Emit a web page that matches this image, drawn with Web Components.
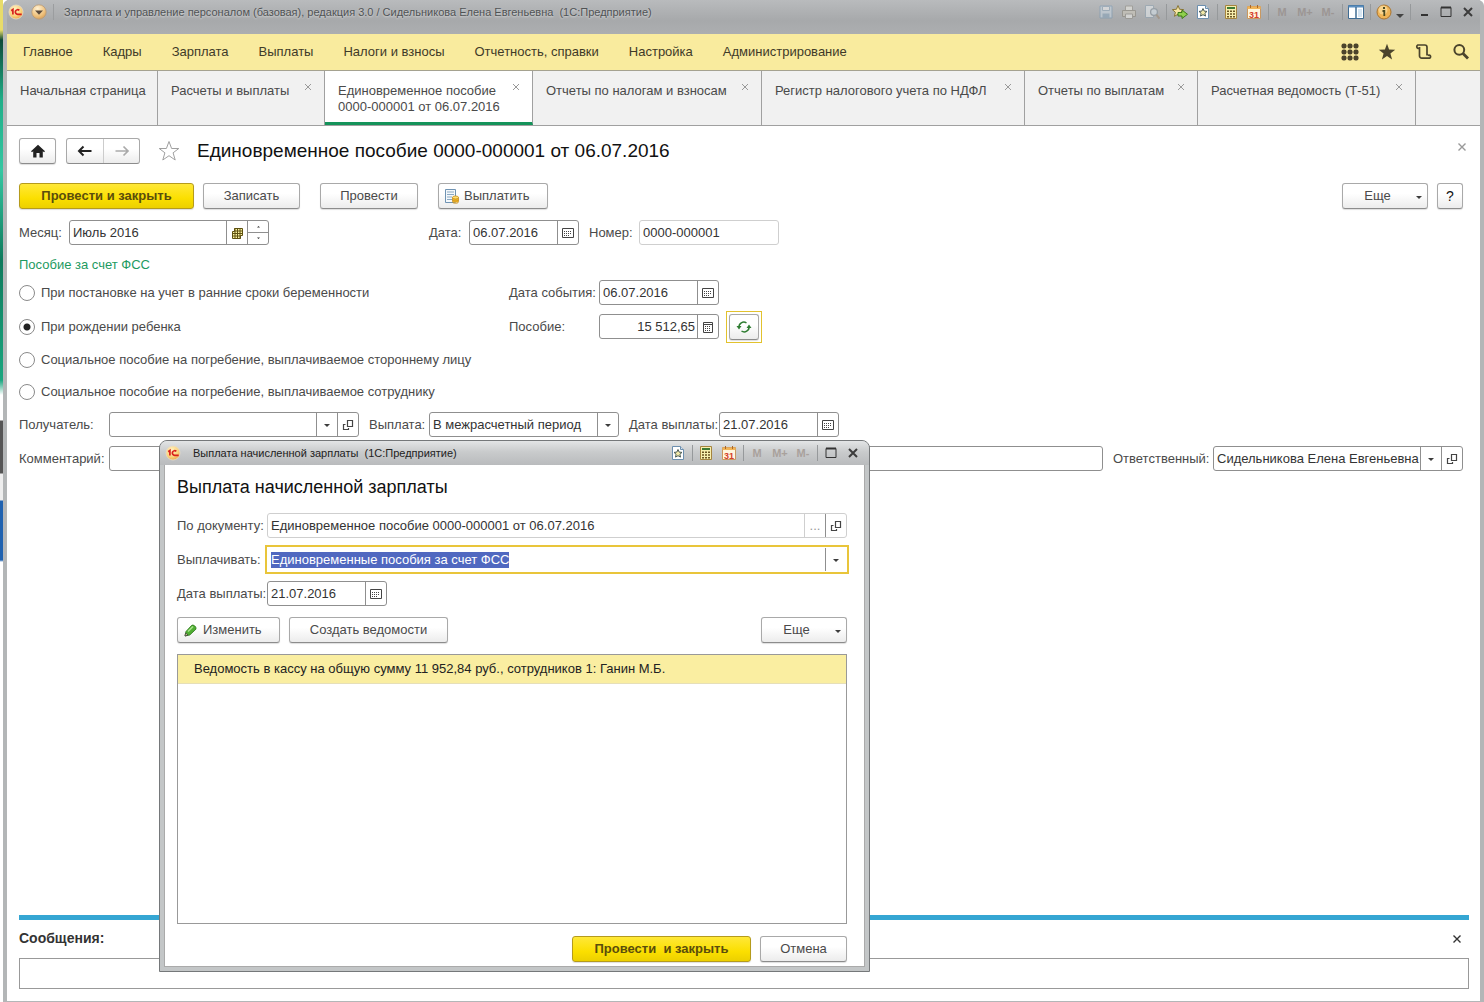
<!DOCTYPE html>
<html lang="ru">
<head>
<meta charset="utf-8">
<title>Зарплата и управление персоналом</title>
<style>
html,body{margin:0;height:100%}
body{font:13px/16px "Liberation Sans",sans-serif;color:#4a4a4a;background:#fff}
</style>
</head>
<body>
<app-window></app-window>
<script>
const ICONS = {
  logo: [16,16,'<defs><radialGradient id="g" cx=".4" cy=".3" r=".8"><stop offset="0" stop-color="#fff3c4"/><stop offset=".6" stop-color="#fbd27a"/><stop offset="1" stop-color="#e79a3c"/></radialGradient></defs><circle cx="8" cy="8" r="7" fill="url(#g)" stroke="#e9dcc8" stroke-width=".8"/><path d="M3.2 6.800l1.700-1.300v5M11.300 6.400a2.300 2.300 0 1 0-1.600 3.900h4" fill="none" stroke="#d8201c" stroke-width="1.700"/>'],
  drop: [16,16,'<defs><radialGradient id="g" cx=".4" cy=".25" r=".9"><stop offset="0" stop-color="#fff1d2"/><stop offset=".6" stop-color="#eec07a"/><stop offset="1" stop-color="#c98e4c"/></radialGradient></defs><circle cx="8" cy="8" r="7.2" fill="url(#g)" stroke="#b79a78" stroke-width=".8"/><path d="M4 6.5h8L8 10.8z" fill="#5b4b3c"/>'],
  save: [16,16,'<g opacity=".45"><path d="M2 2h12v12H2z" fill="#cfe0ee" stroke="#6c93b4"/><path d="M4.5 2.5h7v4h-7z" fill="#fff" stroke="#86a4bd"/><path d="M4.5 9.5h7V14h-7z" fill="#7fa2bf"/></g>'],
  print: [16,16,'<g opacity=".5"><path d="M4.5 2h7v5h-7z" fill="#f5f3ea" stroke="#8f8b80"/><path d="M1.5 6.5h13v6h-13z" fill="#d2ccbb" stroke="#857f70"/><path d="M4.5 10h7v4.5h-7z" fill="#fbfaf5" stroke="#8f8b80"/></g>'],
  preview: [16,16,'<g opacity=".5"><path d="M1.5 1.5h8v12h-8z" fill="#eef3f6" stroke="#8aa0b0"/><circle cx="10" cy="8" r="3.4" fill="#dce9f1" stroke="#7d8b96" stroke-width="1.3"/><path d="M12.4 10.6l3 4" stroke="#9a846a" stroke-width="2"/></g>'],
  favadd: [16,16,'<path d="M6 1.5l1.6 3.8 4.1.3-3.1 2.7 1 4L6 10.200l-3.600 2.100 1-4L.3 5.600l4.100-.3z" fill="#f6e6a4" stroke="#8a7635" stroke-width="1"/><path d="M6 8.500h4V6l5.500 4.300L10 14.500V12H6z" fill="#8fd04c" stroke="#3e7a1b"/>'],
  favdoc: [16,16,'<path d="M2.500 1.500h8l3 3v10h-11z" fill="#fff" stroke="#6c8fae"/><path d="M10.500 1.500v3h3" fill="#d5e2ec" stroke="#6c8fae"/><path d="M8 4.500l1.200 2.600 2.800.3-2.100 1.900.6 2.800L8 10.700l-2.500 1.400.6-2.800L4 7.400l2.800-.3z" fill="#f3e9a8" stroke="#4a5a55" stroke-width="1"/>'],
  calc: [16,16,'<path d="M2.500 1.500h11v13h-11z" fill="#f8efae" stroke="#a5843e"/><path d="M4 3h8v2H4z" fill="#3d7a34"/><g fill="#6a5423"><path d="M4 6.500h2v1.500H4zM7 6.500h2v1.500H7zM10 6.500h2v1.500h-2zM4 9.200h2v1.500H4zM7 9.200h2v1.500H7zM10 9.200h2v1.500h-2zM4 11.900h2v1.500H4zM7 11.900h2v1.500H7zM10 11.900h2v1.500h-2z"/></g>'],
  cal31: [16,16,'<path d="M1.500 2.500h13v12h-13z" fill="#fff6de" stroke="#c99860"/><path d="M1.500 2.500h13V5h-13z" fill="#f2b557"/><path d="M4.500 1v3M11.500 1v3" stroke="#a9662a"/><text x="8" y="13.500" text-anchor="middle" font-family="Liberation Sans,sans-serif" font-size="9" font-weight="bold" fill="#d4402a">31</text>'],
  panes: [16,16,'<path d="M.5 1.500h15v13H.5z" fill="#fff" stroke="#3f6c93"/><path d="M.5 1.500h15v2H.5z" fill="#5b8fc0"/><path d="M8 3v11" stroke="#3f6c93" stroke-width="1.500"/><path d="M10 5h4v8h-4z" fill="#d5e5f2"/>'],
  info: [28,16,'<circle cx="8" cy="8" r="7" fill="#f0b455" stroke="#a97430"/><circle cx="7" cy="6" r="4.500" fill="#fbe0a4" opacity=".7"/><path d="M7 4h2M6.500 7h1.800v5" fill="none" stroke="#4a4a22" stroke-width="1.800"/><path d="M20 10h8l-4 4z" fill="#444"/>'],
  min: [16,16,'<path d="M5 11h7" stroke="#333" stroke-width="2"/>'],
  max: [16,16,'<path d="M3 3.500h10v9H3z" fill="none" stroke="#333"/><path d="M3 3.500h10" stroke="#333" stroke-width="2"/>'],
  close: [16,16,'<path d="M4 4l8 8M12 4l-8 8" stroke="#3c3c3c" stroke-width="2"/>'],
  x: [8,8,'<path d="M1 1l6 6M7 1L1 7" stroke="currentColor"/>'],
  xbold: [8,8,'<path d="M.5.5l7 7M7.500.5l-7 7" stroke="currentColor" stroke-width="1.400"/>'],
  grid: [18,18,'<g fill="#4b442c"><rect x="0.500" y="0.500" width="5" height="5" rx="2"/><rect x="6.500" y="0.500" width="5" height="5" rx="2"/><rect x="12.500" y="0.500" width="5" height="5" rx="2"/><rect x="0.500" y="6.500" width="5" height="5" rx="2"/><rect x="6.500" y="6.500" width="5" height="5" rx="2"/><rect x="12.500" y="6.500" width="5" height="5" rx="2"/><rect x="0.500" y="12.500" width="5" height="5" rx="2"/><rect x="6.500" y="12.500" width="5" height="5" rx="2"/><rect x="12.500" y="12.500" width="5" height="5" rx="2"/></g>'],
  star: [18,18,'<path d="M9 .8l2.100 5.700 6.100.2-4.800 3.800 1.700 5.900L9 13l-5.100 3.400 1.700-5.900L.8 6.700l6.100-.2z" fill="#4b442c"/>'],
  scroll: [18,18,'<path d="M4.500 5.300A1.700 1.700 0 1 1 2.800 2H9.800A2.200 2.200 0 0 1 12 4.200V12.500M4.500 4v8.800a2.300 2.300 0 0 0 2.300 2.400h7.700a1.600 1.600 0 1 0-1.700-2.600" fill="none" stroke="#4b442c" stroke-width="1.700"/>'],
  search: [18,18,'<circle cx="7.300" cy="6.800" r="4.900" fill="none" stroke="#4b442c" stroke-width="2"/><path d="M11 10.500l5 5" stroke="#4b442c" stroke-width="2.800"/>'],
  home: [16,16,'<path d="M8 1.800l7 6.400-1 1.100-1.200-1V14.500H9.500V10h-3v4.500H3.200V8.300L2 9.300 1 8.200z" fill="#222"/>'],
  back: [16,16,'<path d="M1.500 8h13M6.500 3.500L2 8l4.500 4.500" fill="none" stroke="#222" stroke-width="2"/>'],
  fwd: [16,16,'<path d="M1.500 8h13M9.500 3.500L14 8l-4.500 4.500" fill="none" stroke="#aaa" stroke-width="1.700"/>'],
  starline: [22,22,'<path d="M11 1.500l2.600 7h7.200l-5.700 4.300 2.100 7.200L11 15.700l-6.200 4.300 2.100-7.200L1.200 8.500h7.200z" fill="#fff" stroke="#a0a0a0"/>'],
  pay: [16,16,'<path d="M1.500 1.500h10v13h-10z" fill="#f4f8fb" stroke="#6f93b3"/><path d="M3 4h7M3 6.500h7M3 9h5M3 11.500h5" stroke="#8ba9c3"/><path d="M9 9.500h5v5H9z" fill="#f0b62a"/><ellipse cx="11.500" cy="9.500" rx="3" ry="1.500" fill="#ffdf70" stroke="#c68a14" stroke-width=".8"/><path d="M8.500 9.500v4.300c0 2 6 2 6 0V9.500M8.500 11.700c0 1.800 6 1.800 6 0" fill="none" stroke="#c68a14" stroke-width=".8"/>'],
  pencil: [16,16,'<path d="M2 14l1-4.500L8.500 3.500c1.500-1.500 5.500 1.300 4.300 3.800L6.800 13z" fill="#4fae32" stroke="#277317" stroke-width=".8"/><path d="M5 9.500L10 4.500" stroke="#a8e28c" stroke-width="1.600"/><path d="M2 14l.6-3 2.400 2z" fill="#e8d9a8" stroke="#333" stroke-width=".7"/>'],
  caret: [16,16,'<path d="M5 7h6l-3 3z" fill="#3c3c3c"/>'],
  open: [16,16,'<path d="M7.500 3.500h5v6h-5z" fill="none" stroke="#444" stroke-width="1.200"/><path d="M5.500 7.500H3.500v5h5v-1.500" fill="none" stroke="#444" stroke-width="1.200"/>'],
  cal: [16,16,'<path d="M2.500 3.500h11v9h-11z" fill="none" stroke="#444"/><path d="M4 6.500h8M4 8.500h8M4 10.500h6" stroke="#444" stroke-dasharray="1 1"/>'],
  calcsm: [16,16,'<path d="M3.500 3.500h9v10h-9z" fill="none" stroke="#444"/><path d="M4 5.500h8" stroke="#444"/><path d="M5 7.500h6M5 9.500h6M5 11.500h6" stroke="#444" stroke-dasharray="1 1"/>'],
  month: [16,16,'<path d="M5.500 3.500h8v7h-2v3h-8v-7h2z" fill="#fbf3a0"/><path d="M5.500 3.500h8v7h-2v3h-8v-7h2zM3 8.500h11M3 11h9M5 6h8.500M6 3v11M8.500 3v11M11 3v11" fill="none" stroke="#5e5110"/>'],
  refresh: [16,16,'<path d="M3 8.500A4.800 4.800 0 0 1 10.500 4M13 7.500A4.800 4.800 0 0 1 5.500 12" fill="none" stroke="#2f7d32" stroke-width="1.500"/><path d="M.5 7h5L3 10.500zM15.500 9h-5L13 5.500z" fill="#2f7d32"/>']
};

class UiIcon extends HTMLElement {
  connectedCallback() {
    const [w, h, body] = ICONS[this.getAttribute('name')];
    this.attachShadow({mode: 'open'}).innerHTML =
      `<style>:host{display:inline-flex;flex:none}svg{display:block}</style>
       <svg width="${w}" height="${h}" viewBox="0 0 ${w} ${h}" aria-hidden="true">${body}</svg>`;
  }
}
customElements.define('ui-icon', UiIcon);

/* Push button: variants primary, icon only and menu. */
class UiButton extends HTMLElement {
  connectedCallback() {
    const icon = this.getAttribute('icon'), label = this.getAttribute('label') || '';
    this.attachShadow({mode: 'open'}).innerHTML = `<style>
      :host{display:block;flex:none}
      button{box-sizing:border-box;width:100%;height:26px;margin:0;padding:0 5px;display:flex;align-items:center;justify-content:center;gap:4px;
        border:1px solid #a9a9a9;border-bottom-color:#8c8c8c;border-radius:3px;background:linear-gradient(#fff 40%,#ececec);
        font:inherit;color:#4a4a4a;white-space:pre;box-shadow:0 1px 1px #0002}
      :host([primary]) button{background:linear-gradient(#ffe838,#fbdf00 60%,#ecd000);border-color:#b59b1c;color:#5a4d0c;font-weight:bold}
      :host([icon][label]) button{justify-content:flex-start}
      :host([menu]) .t{flex:1;text-align:center}
      :host([menu]) button{padding-right:0}
      :host([menu]) ui-icon{padding-top:2px}
      :host([focused]){outline:1px solid #e2c22e;outline-offset:2px}
      :host([help]) button{color:#111;font-size:14px}
    </style><button type="button" aria-label="${label || this.getAttribute('hint') || ''}">${icon ? `<ui-icon name="${icon}"></ui-icon>` : ''}${label ? `<span class="t">${label}</span>` : ''}${this.hasAttribute('menu') ? '<ui-icon name="caret"></ui-icon>' : ''}</button>`;
  }
}
customElements.define('ui-button', UiButton);

/* Small button inside a field, right of its text. */
class FieldButton extends HTMLElement {
  connectedCallback() {
    const icon = this.getAttribute('icon');
    this.attachShadow({mode: 'open'}).innerHTML = `<style>
      :host{display:flex;flex:none;width:20px;border-left:1px solid var(--line,#8f8f8f)}
      button{flex:1;margin:0;padding:0;border:0;background:none;display:flex;align-items:center;justify-content:center;font:inherit;color:#999}
      ui-icon{margin-top:1px}
    </style><button type="button" aria-label="${this.getAttribute('hint')}">${icon ? `<ui-icon name="${icon}"></ui-icon>` : '...'}</button>`;
  }
}
customElements.define('field-button', FieldButton);

class FieldSpinner extends HTMLElement {
  connectedCallback() {
    this.attachShadow({mode: 'open'}).innerHTML = `<style>
      :host{display:flex;flex-direction:column;flex:none;width:20px;border-left:1px solid #8f8f8f}
      button{flex:1;margin:0;padding:0;border:0;background:none;display:flex;align-items:center;justify-content:center}
      button+button{border-top:1px solid #8f8f8f}
    </style><button type="button" aria-label="Больше"><svg width="5" height="3"><path d="M1 2.500h3L2.500 1z" fill="#333"/></svg></button>
    <button type="button" aria-label="Меньше"><svg width="5" height="3"><path d="M1 .5h3L2.500 2z" fill="#333"/></svg></button>`;
  }
}
customElements.define('field-spinner', FieldSpinner);

/* Labelled text box or drop-down; its buttons are slotted in. */
class FormField extends HTMLElement {
  connectedCallback() {
    const v = this.getAttribute('value') || '';
    const control = this.hasAttribute('select')
      ? `<select id="c"><option>${v}</option></select>`
      : `<input id="c" type="text" value="${v}"${this.hasAttribute('locked') ? ' readonly' : ''}>`;
    this.attachShadow({mode: 'open'}).innerHTML = `<style>
      :host{display:flex;align-items:center;min-width:0}
      label{flex:none;width:var(--label,90px);white-space:nowrap}
      .box{box-sizing:border-box;display:flex;flex:1 1 0;min-width:0;height:25px;border:1px solid #8f8f8f;border-radius:3px;background:#fff}
      input,select{flex:1;min-width:0;width:100%;margin:0;padding:0 0 0 3px;border:0;outline:0;background:none;font:inherit;color:#333;appearance:none}
      :host([number]) input{text-align:right;padding-right:2px}
      :host([locked]) .box{border-color:#cfcfcf;--line:#cfcfcf}
      :host([current]) .box{border-color:transparent;border-radius:0;outline:2px solid #e9c53a}
      ::selection{background:#5068c0;color:#fff}
    </style><label for="c">${this.getAttribute('label')}</label><div class="box">${control}<slot></slot></div>`;
    if (this.hasAttribute('current')) {
      const c = this.shadowRoot.getElementById('c');
      c.focus();
      c.select();
    }
  }
}
customElements.define('form-field', FormField);

class RadioGroup extends HTMLElement {
  connectedCallback() {
    const items = ['При постановке на учет в ранние сроки беременности', 'При рождении ребенка',
      'Социальное пособие на погребение, выплачиваемое стороннему лицу', 'Социальное пособие на погребение, выплачиваемое сотруднику'];
    this.attachShadow({mode: 'open'}).innerHTML = `<style>
      :host{display:grid;grid-template-rows:25px 25px 23px 23px;row-gap:9px;width:490px}
      label{display:flex;align-items:center;gap:6px;white-space:nowrap}
      input{appearance:none;box-sizing:border-box;width:16px;height:16px;margin:0;border:1px solid #8a8a8a;border-radius:50%;background:#fff}
      input:checked{background:radial-gradient(circle,#222 3px,#fff 4px)}
    </style>` + items.map((t, i) => `<label><input type="radio" name="kind"${i === 1 ? ' checked' : ''}>${t}</label>`).join('');
  }
}
customElements.define('radio-group', RadioGroup);

/* Icon strip shared by both title bars; a group starts at each rule. */
class IconStrip extends HTMLElement {
  connectedCallback() {
    const groups = this.getAttribute('items').split('|').map(g => g.trim().split(' '));
    this.attachShadow({mode: 'open'}).innerHTML = `<style>
      :host{display:flex;flex:none}
      div{display:flex;gap:7px}
      div:last-child{gap:6px}
      div+div{margin-left:6px;padding-left:5px;border-left:1px solid #96999b}
      button{width:16px;height:16px;margin:0;padding:0;border:0;background:none;display:flex;justify-content:center;font:bold 11px/16px "Liberation Sans",sans-serif;color:var(--dim,#9c9694)}
      button.wide{width:28px}
    </style>` + groups.map(g => '<div>' + g.map(n => ICONS[n]
      ? `<button type="button" class="${n === 'info' ? 'wide' : ''}" aria-label="${n}"><ui-icon name="${n}"></ui-icon></button>`
      : `<button type="button">${n}</button>`).join('') + '</div>').join('');
  }
}
customElements.define('icon-strip', IconStrip);

class TitleBar extends HTMLElement {
  connectedCallback() {
    this.attachShadow({mode: 'open'}).innerHTML = `<style>
      :host{display:flex;align-items:flex-start;box-sizing:border-box;height:34px;padding:4px 4px 0 1px;background:linear-gradient(#b9bbbd,#a7a9ab 60%,#acaeb0)}
      .drop{margin:0 10px 0 7px;padding-right:6px;border-right:1px solid #9b9d9f}
      span{flex:1;white-space:pre;font-size:11px;color:#505355;text-shadow:0 1px 2px #fff8}
    </style><ui-icon name="logo"></ui-icon><ui-icon class="drop" name="drop"></ui-icon>
    <span>Зарплата и управление персоналом (базовая), редакция 3.0 / Сидельникова Елена Евгеньевна  (1С:Предприятие)</span>
    <icon-strip items="save print preview | favadd favdoc | calc cal31 | M M+ M- | panes | info | min max close"></icon-strip>`;
  }
}
customElements.define('title-bar', TitleBar);

class MainMenu extends HTMLElement {
  connectedCallback() {
    const items = ['Главное', 'Кадры', 'Зарплата', 'Выплаты', 'Налоги и взносы', 'Отчетность, справки', 'Настройка', 'Администрирование'];
    this.attachShadow({mode: 'open'}).innerHTML = `<style>
      :host{display:flex;align-items:center;justify-content:space-between;box-sizing:border-box;height:37px;padding:0 10px 0 16px;background:#f9eb9e;border-bottom:1px solid #a5a290}
      nav,div{display:flex;gap:30px}
      div{gap:19px}
      a{color:#3f3a28;text-decoration:none;white-space:nowrap}
      button{margin:0;padding:0;border:0;background:none;display:flex}
    </style><nav>${items.map(t => `<a href="#">${t}</a>`).join('')}</nav>
    <div>${[['grid','Все функции'],['star','Избранное'],['scroll','История'],['search','Поиск']].map(([n, t]) => `<button type="button" aria-label="${t}"><ui-icon name="${n}"></ui-icon></button>`).join('')}</div>`;
  }
}
customElements.define('main-menu', MainMenu);

class PageTab extends HTMLElement {
  connectedCallback() {
    this.attachShadow({mode: 'open'}).innerHTML = `<style>
      :host{display:flex;align-items:flex-start;justify-content:space-between;box-sizing:border-box;padding:12px 12px 0 13px;border-right:1px solid #a0a0a0;background:#f1f1f1}
      :host([active]){background:#fff;border-bottom:3px solid #14935a}
      a{color:inherit;text-decoration:none;white-space:nowrap}
      button{margin:0;padding:0;border:0;background:none;color:#999;display:flex}
    </style><a href="#"><slot></slot></a>${this.hasAttribute('fixed') ? '' : '<button type="button" aria-label="Закрыть"><ui-icon name="x"></ui-icon></button>'}`;
  }
}
customElements.define('page-tab', PageTab);

class PageTabs extends HTMLElement {
  connectedCallback() {
    this.attachShadow({mode: 'open'}).innerHTML = `<style>
      :host{display:flex;box-sizing:border-box;height:55px;background:#f1f1f1;border-bottom:1px solid #a0a0a0}
    </style>
    <page-tab fixed style="width:151px">Начальная страница</page-tab>
    <page-tab style="width:167px">Расчеты и выплаты</page-tab>
    <page-tab active style="width:208px">Единовременное пособие<br>0000-000001 от 06.07.2016</page-tab>
    <page-tab style="width:229px">Отчеты по налогам и взносам</page-tab>
    <page-tab style="width:263px">Регистр налогового учета по НДФЛ</page-tab>
    <page-tab style="width:173px">Отчеты по выплатам</page-tab>
    <page-tab style="width:218px">Расчетная ведомость (Т-51)</page-tab>`;
  }
}
customElements.define('page-tabs', PageTabs);

class DocumentForm extends HTMLElement {
  connectedCallback() {
    this.attachShadow({mode: 'open'}).innerHTML = `<style>
      :host{display:flex;flex-direction:column;padding:12px 17px 0 12px}
      .row{display:flex;align-items:center;gap:10px}
      .head{height:26px}
      .nav{display:flex;border:1px solid #a9a9a9;border-bottom-color:#8c8c8c;border-radius:3px;background:linear-gradient(#fff 40%,#ececec);box-sizing:border-box;height:26px}
      .nav button{width:36px;margin:0;padding:0;border:0;background:none;display:flex;align-items:center;justify-content:center}
      .nav button+button{border-left:1px solid #ccc}
      .plain{margin:0 0 0 8px;padding:0;border:0;background:none;display:flex}
      h1{flex:1;margin:0 0 0 7px;font-size:19px;line-height:24px;font-weight:normal;color:#111}
      .x{align-self:flex-start;margin:5px -3px 0 0;padding:0;border:0;background:none;color:#999;display:flex}
      .commands{margin-top:19px;gap:9px}
      .commands .apart{margin-left:11px}
      .fill{flex:1}
      .top{margin-top:11px}
      .month{width:250px;margin-right:150px}
      h2{margin:12px 0 7px;font-size:13px;line-height:16px;font-weight:normal;color:#1d9a5f}
      .kinds{display:flex;align-items:flex-start}
      .amounts{display:flex;flex-direction:column;gap:9px}
      .last{margin-top:9px}
    </style>
    <div class="row head">
      <ui-button icon="home" hint="Начальная страница" style="width:37px"></ui-button>
      <div class="nav"><button type="button" aria-label="Назад"><ui-icon name="back"></ui-icon></button><button type="button" aria-label="Вперед"><ui-icon name="fwd"></ui-icon></button></div>
      <button class="plain" type="button" aria-label="В избранное"><ui-icon name="starline"></ui-icon></button>
      <h1>Единовременное пособие 0000-000001 от 06.07.2016</h1>
      <button class="x" type="button" aria-label="Закрыть"><ui-icon name="xbold"></ui-icon></button>
    </div>
    <div class="row commands">
      <ui-button primary label="Провести и закрыть" style="width:175px"></ui-button>
      <ui-button label="Записать" style="width:97px"></ui-button>
      <ui-button class="apart" label="Провести" style="width:98px"></ui-button>
      <ui-button class="apart" icon="pay" label="Выплатить" style="width:110px"></ui-button>
      <span class="fill"></span>
      <ui-button menu label="Еще" style="width:86px"></ui-button>
      <ui-button help label="?" style="width:26px"></ui-button>
    </div>
    <div class="row top">
      <form-field class="month" label="Месяц:" value="Июль 2016" style="--label:50px"><field-button icon="month" hint="Выбрать"></field-button><field-spinner></field-spinner></form-field>
      <form-field label="Дата:" value="06.07.2016" style="--label:40px;width:150px"><field-button icon="cal" hint="Календарь"></field-button></form-field>
      <form-field locked label="Номер:" value="0000-000001" style="--label:50px;width:190px"></form-field>
    </div>
    <h2>Пособие за счет ФСС</h2>
    <div class="kinds">
      <radio-group></radio-group>
      <div class="amounts">
        <form-field label="Дата события:" value="06.07.2016" style="width:210px"><field-button icon="cal" hint="Календарь"></field-button></form-field>
        <div class="row" style="height:25px"><form-field number label="Пособие:" value="15 512,65" style="width:210px"><field-button icon="calcsm" hint="Калькулятор"></field-button></form-field>
        <ui-button focused icon="refresh" hint="Пересчитать" style="width:30px"></ui-button></div>
      </div>
    </div>
    <div class="row last">
      <form-field label="Получатель:" style="width:340px"><field-button icon="caret" hint="Выбрать"></field-button><field-button icon="open" hint="Открыть"></field-button></form-field>
      <form-field select label="Выплата:" value="В межрасчетный период" style="--label:60px;width:250px"><field-button icon="caret" hint="Выбрать"></field-button></form-field>
      <form-field label="Дата выплаты:" value="21.07.2016" style="width:210px"><field-button icon="cal" hint="Календарь"></field-button></form-field>
    </div>
    <div class="row last">
      <form-field class="fill" label="Комментарий:"></form-field>
      <form-field label="Ответственный:" value="Сидельникова Елена Евгеньевна" style="--label:100px;width:350px"><field-button icon="caret" hint="Выбрать"></field-button><field-button icon="open" hint="Открыть"></field-button></form-field>
    </div>`;
  }
}
customElements.define('document-form', DocumentForm);

class MessagePanel extends HTMLElement {
  connectedCallback() {
    this.attachShadow({mode: 'open'}).innerHTML = `<style>
      :host{display:block;margin:auto 11px 12px 12px;border-top:5px solid #35a6d3}
      header{display:flex;align-items:center;justify-content:space-between;height:38px;padding-right:8px;box-sizing:border-box}
      label{font-size:14px;font-weight:bold;color:#333;padding-bottom:2px}
      button{margin:0;padding:0;border:0;background:none;color:#333;display:flex}
      textarea{display:block;box-sizing:border-box;width:100%;height:31px;margin:0;border:1px solid #999;border-radius:0;resize:none;font:inherit;background:#fff}
    </style><header><label for="m">Сообщения:</label><button type="button" aria-label="Закрыть"><ui-icon name="xbold"></ui-icon></button></header><textarea id="m" readonly></textarea>`;
  }
}
customElements.define('message-panel', MessagePanel);

class PayDialog extends HTMLElement {
  connectedCallback() {
    this.attachShadow({mode: 'open'}).innerHTML = `<style>
      :host{position:absolute;left:159px;top:440px;width:711px;height:532px;box-sizing:border-box;display:flex;flex-direction:column;padding:0 4px 4px;border:1px solid #75787a;border-radius:8px 8px 0 0;background:#c3c6c7}
      .bar{display:flex;align-items:center;flex:none;height:24px;margin:0 -4px;padding:0 8px 0 5px;border-radius:7px 7px 0 0;background:linear-gradient(#e3e5e6,#c9cbcc 45%,#b9bbbd)}
      .bar span{flex:1;margin-left:12px;font-size:11px;color:#222;white-space:pre}
      main{flex:1;display:flex;flex-direction:column;background:#fff;border:1px solid #aaa;border-top:0;padding:9px 17px 4px 12px;gap:9px}
      h1{margin:0 0 4px;font-size:18px;line-height:26px;font-weight:normal;color:#111}
      .row{display:flex;gap:9px;margin-top:2px}
      .fill{flex:1}
      ul{flex:1;margin:2px 0 3px;padding:0;list-style:none;border:1px solid #999}
      li{padding:6px 16px;background:#faeea1;border-bottom:1px solid #e6dfb8;color:#222}
    </style>
    <div class="bar"><ui-icon name="logo"></ui-icon><span>Выплата начисленной зарплаты  (1С:Предприятие)</span>
      <icon-strip items="favdoc | calc cal31 | M M+ M- | max close" style="--dim:#a9a19c"></icon-strip></div>
    <main>
      <h1>Выплата начисленной зарплаты</h1>
      <form-field locked label="По документу:" value="Единовременное пособие 0000-000001 от 06.07.2016"><field-button hint="Выбрать"></field-button><field-button icon="open" hint="Открыть" style="--line:#8f8f8f"></field-button></form-field>
      <form-field current label="Выплачивать:" value="Единовременные пособия за счет ФСС"><field-button icon="caret" hint="Выбрать"></field-button></form-field>
      <form-field label="Дата выплаты:" value="21.07.2016" style="width:210px"><field-button icon="cal" hint="Календарь"></field-button></form-field>
      <div class="row">
        <ui-button icon="pencil" label="Изменить" style="width:103px"></ui-button>
        <ui-button label="Создать ведомости" style="width:159px"></ui-button>
        <span class="fill"></span>
        <ui-button menu label="Еще" style="width:86px"></ui-button>
      </div>
      <ul><li>Ведомость в кассу на общую сумму 11 952,84 руб., сотрудников 1: Ганин М.Б.</li></ul>
      <div class="row" style="margin-top:0">
        <span class="fill"></span>
        <ui-button primary label="Провести  и закрыть" style="width:179px"></ui-button>
        <ui-button label="Отмена" style="width:87px"></ui-button>
      </div>
    </main>`;
  }
}
customElements.define('pay-dialog', PayDialog);

class AppWindow extends HTMLElement {
  connectedCallback() {
    this.attachShadow({mode: 'open'}).innerHTML = `<style>
      :host{position:relative;display:flex;min-height:100vh}
      .desk{flex:none;width:3px;background:linear-gradient(#e8dc6a 0 30px,#0d4a38 40px,#1fae88 100px,#35c7a2 170px,#0e7a5c 260px,#1aa67f 380px,#fff 395px 420px,#555 421px 473px,#eee 474px 500px,#1f62b0 501px 560px,#fff 562px)}
      .frame{flex:1;min-width:0;display:flex;flex-direction:column;border:solid #b3b6b7;border-width:0 4px 1px;border-radius:6px 6px 0 0;box-sizing:border-box;background:#fff}
    </style>
    <div class="desk"></div>
    <div class="frame"><title-bar></title-bar><main-menu></main-menu><page-tabs></page-tabs><document-form></document-form><message-panel></message-panel></div>
    <pay-dialog></pay-dialog>`;
  }
}
customElements.define('app-window', AppWindow);
</script>
</body>
</html>
